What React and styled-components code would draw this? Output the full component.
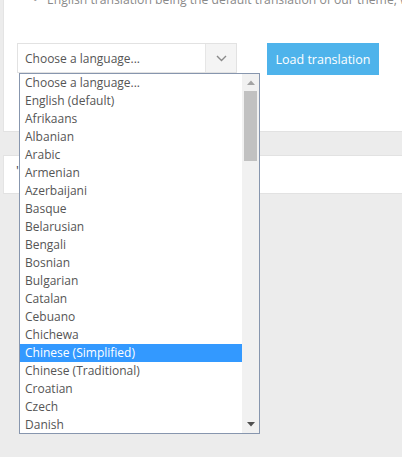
import React from "react";
import styled, { createGlobalStyle } from "styled-components";

const GlobalStyle = createGlobalStyle`
  html, body { margin: 0; padding: 0; }
  body {
    background: #ececec;
    font-family: "Open Sans", "Noto Sans", sans-serif;
    overflow: hidden;
  }
`;

const Page = styled.div`
  padding-left: 3px;
  height: 457px;
  overflow: hidden;
`;

const Card = styled.section`
  background: #ffffff;
  border-left: 1px solid #e4e4e4;
  border-bottom: 1px solid #e2e2e2;
  border-top: ${(p) => (p.$top ? "1px solid #e2e2e2" : "none")};
  margin-top: ${(p) => p.$gap || 0}px;
  height: ${(p) => p.$h}px;
  box-sizing: border-box;
  position: relative;
`;

const BulletList = styled.ul`
  margin: 0;
  padding: 0 0 0 43px;
  position: relative;
  top: -9px;
  list-style: none;
  color: #8a8a8a;
  font-size: 12.2px;
  line-height: 18px;
  white-space: nowrap;
`;

const Bullet = styled.li`
  &::before {
    content: "•";
    display: inline-block;
    width: 14px;
    margin-left: -14px;
    color: #9a9a9a;
  }
`;

const FormRow = styled.div`
  display: flex;
  align-items: flex-start;
  gap: 30px;
  padding-left: 13px;
  margin-top: 25px;
`;

const SelectWrap = styled.div`
  position: relative;
  width: 220px;
`;

const SelectBox = styled.div`
  display: flex;
  height: 30px;
  box-sizing: border-box;
  border: 1px solid #e2e2e2;
  background: #fff;
`;

const SelectText = styled.div`
  flex: 1;
  padding-left: 7px;
  font-size: 12px;
  line-height: 29px;
  color: #555;
`;

const SelectArrow = styled.div`
  width: 30px;
  border-left: 1px solid #e6e6e6;
  background: #f4f4f4;
  display: flex;
  align-items: center;
  justify-content: center;
`;

const Button = styled.button`
  height: 32px;
  width: 112px;
  border: none;
  background: #4eb3eb;
  color: #fff;
  font-family: "Open Sans", "Noto Sans", sans-serif;
  font-size: 12.5px;
  padding: 0;
  cursor: pointer;
`;

const ListBox = styled.div`
  position: absolute;
  top: 30px;
  left: 2px;
  width: 241px;
  height: 361px;
  box-sizing: border-box;
  border: 1px solid #8796ae;
  background: #fff;
  display: flex;
  z-index: 5;
`;

const Options = styled.div`
  flex: 1;
`;

const Option = styled.div`
  height: 18px;
  line-height: 18px;
  padding-left: 5px;
  font-size: 12px;
  white-space: nowrap;
  color: ${(p) => (p.$sel ? "#ffffff" : "#555555")};
  background: ${(p) => (p.$sel ? "#3399ff" : "transparent")};
`;

const ScrollBar = styled.div`
  width: 17px;
  background: #f1f1f1;
  display: flex;
  flex-direction: column;
  align-items: center;
`;

const ScrollBtn = styled.div`
  height: 17px;
  width: 17px;
  display: flex;
  align-items: center;
  justify-content: center;
`;

const Thumb = styled.div`
  width: 13px;
  height: 70px;
  background: #c1c1c1;
`;

const Spacer = styled.div`
  flex: 1;
`;

const HiddenText = styled.div`
  padding: 5px 0 0 12px;
  font-size: 13px;
  color: #444;
`;

const languages = [
  "Choose a language...",
  "English (default)",
  "Afrikaans",
  "Albanian",
  "Arabic",
  "Armenian",
  "Azerbaijani",
  "Basque",
  "Belarusian",
  "Bengali",
  "Bosnian",
  "Bulgarian",
  "Catalan",
  "Cebuano",
  "Chichewa",
  "Chinese (Simplified)",
  "Chinese (Traditional)",
  "Croatian",
  "Czech",
  "Danish",
];

export default function App() {
  return (
    <>
      <GlobalStyle />
      <Page>
        <Card $h={132}>
          <BulletList>
            <Bullet>English translation being the default translation of our theme, which</Bullet>
          </BulletList>
          <FormRow>
            <SelectWrap>
              <SelectBox>
                <SelectText>Choose a language...</SelectText>
                <SelectArrow>
                  <svg width="11" height="7" viewBox="0 0 11 7">
                    <polyline points="1,1 5.5,5.5 10,1" fill="none" stroke="#8a8a8a" strokeWidth="1.4" />
                  </svg>
                </SelectArrow>
              </SelectBox>
              <ListBox>
                <Options>
                  {languages.map((l) => (
                    <Option key={l} $sel={l === "Chinese (Simplified)"}>{l}</Option>
                  ))}
                </Options>
                <ScrollBar>
                  <ScrollBtn>
                    <svg width="8" height="5" viewBox="0 0 8 5">
                      <polygon points="0,5 4,0.5 8,5" fill="#a3a3a3" />
                    </svg>
                  </ScrollBtn>
                  <Thumb />
                  <Spacer />
                  <ScrollBtn>
                    <svg width="8" height="5" viewBox="0 0 8 5">
                      <polygon points="0,0 8,0 4,4.5" fill="#505050" />
                    </svg>
                  </ScrollBtn>
                </ScrollBar>
              </ListBox>
            </SelectWrap>
            <Button>Load translation</Button>
          </FormRow>
        </Card>
        <Card $top $gap={23} $h={39}>
          <HiddenText>'</HiddenText>
        </Card>
      </Page>
    </>
  );
}
